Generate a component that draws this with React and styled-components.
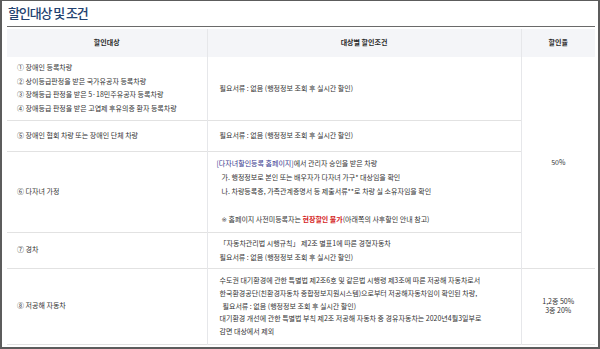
import React from 'react'
import styled, { createGlobalStyle } from 'styled-components'

const GlobalStyle = createGlobalStyle`
  html, body {
    margin: 0;
    padding: 0;
    background: #fff;
  }
  body {
    font-family: "Noto Sans CJK KR", "Noto Sans", sans-serif;
    color: #333;
  }
`

const Frame = styled.div`
  width: 600px;
  height: 349px;
  box-sizing: border-box;
  border: 2px solid #5c5c5c;
  border-top-width: 1px;
  padding: 2px 3px 0 5px;
  overflow: hidden;
`

const Title = styled.h2`
  margin: 0 0 2px;
  padding: 0 0 0 1px;
  height: 23px;
  border-bottom: 1px solid #6a6a6a;
  font-size: 13px;
  font-weight: 500;
  line-height: 20px;
  letter-spacing: -1.1px;
  color: #234270;
`

const Table = styled.table`
  width: 588px;
  border-collapse: collapse;
  table-layout: fixed;
  font-size: 7px;
  line-height: 13.5px;
  color: #333;
`

const HeadCell = styled.th`
  height: 28px;
  padding: 0;
  background: #f4f5f8;
  font-weight: 700;
  color: #2a2a2a;
  text-align: center;
  border-left: 1px solid #e6e7ea;
  &:first-child {
    border-left: none;
  }
`

const Row = styled.tr`
  height: ${p => p.$h}px;
  border-bottom: 1px solid #e2e2e2;
`

const Cell = styled.td`
  padding: 2px ${p => (p.$center ? 0 : 10)}px 2px ${p => (p.$center ? 0 : p.$pl || 10)}px;
  vertical-align: middle;
  text-align: ${p => (p.$center ? 'center' : 'left')};
  line-height: ${p => p.$lh || 13.5}px;
  border-left: 1px solid #e6e7ea;
  &:first-child {
    border-left: none;
  }
`

const Line = styled.div`
  padding-left: ${p => p.$indent || 0}px;
  white-space: nowrap;
  min-height: ${p => p.$lh || 13.5}px;
`

const LinkText = styled.span`
  color: #35358c;
`

const Warn = styled.strong`
  color: #d42323;
  font-weight: 700;
`

const Mark = styled.span`
  font-family: "DejaVu Sans", sans-serif;
  font-size: 6.5px;
  color: #444;
`

const Rate = styled.div`
  line-height: 9px;
`

const noDocs = '필요서류 : 없음 (행정정보 조회 후 실시간 할인)'

export default function App() {
  return (
    <>
      <GlobalStyle />
      <Frame>
        <Title>할인대상 및 조건</Title>
        <Table>
          <colgroup>
            <col style={{ width: 200 }} />
            <col style={{ width: 314 }} />
            <col style={{ width: 74 }} />
          </colgroup>
          <thead>
            <tr>
              <HeadCell>할인대상</HeadCell>
              <HeadCell>대상별 할인조건</HeadCell>
              <HeadCell>할인율</HeadCell>
            </tr>
          </thead>
          <tbody>
            <Row $h={63}>
              <Cell>
                <Line>① 장애인 등록차량</Line>
                <Line>② 상이등급판정을 받은 국가유공자 등록차량</Line>
                <Line>③ 장해등급 판정을 받은 5·18민주유공자 등록차량</Line>
                <Line>④ 장애등급 판정을 받은 고엽제 후유의증 환자 등록차량</Line>
              </Cell>
              <Cell $pl={12}>{noDocs}</Cell>
              <Cell $center rowSpan={4}>50%</Cell>
            </Row>
            <Row $h={31}>
              <Cell>⑤ 장애인 협회 차량 또는 장애인 단체 차량</Cell>
              <Cell $pl={12}>{noDocs}</Cell>
            </Row>
            <Row $h={81}>
              <Cell>⑥ 다자녀 가정</Cell>
              <Cell $pl={9} $lh={14}>
                <Line $lh={14}>
                  <LinkText>[다자녀할인등록 홈페이지]</LinkText>에서 관리자 승인을 받은 차량
                </Line>
                <Line $lh={14} $indent={5}>가. 행정정보로 본인 또는 배우자가 다자녀 가구* 대상임을 확인</Line>
                <Line $lh={14} $indent={5}>나. 차량등록증, 가족관계증명서 등 제출서류**로 차량 실 소유자임을 확인</Line>
                <Line $lh={14}>&nbsp;</Line>
                <Line $lh={14} $indent={5}>
                  <Mark>※</Mark> 홈페이지 사전미등록자는 <Warn>현장할인 불가</Warn>(아래쪽의 사후할인 안내 참고)
                </Line>
              </Cell>
            </Row>
            <Row $h={36}>
              <Cell>⑦ 경차</Cell>
              <Cell $pl={12} $lh={14}>
                <Line $lh={14}>「자동차관리법 시행규칙」 제2조 별표1에 따른 경형자동차</Line>
                <Line $lh={14}>{noDocs}</Line>
              </Cell>
            </Row>
            <Row $h={76}>
              <Cell>⑧ 저공해 자동차</Cell>
              <Cell $pl={12} $lh={12.8}>
                <Line $lh={12.8}>수도권 대기환경에 관한 특별법 제2조6호 및 같은법 시행령 제3조에 따른 저공해 자동차로서</Line>
                <Line $lh={12.8}>한국환경공단(친환경자동차 종합정보지원시스템)으로부터 저공해자동차임이 확인된 차량,</Line>
                <Line $lh={12.8} $indent={3}>{noDocs}</Line>
                <Line $lh={12.8}>대기환경 개선에 관한 특별법 부칙 제2조 저공해 자동차 중 경유자동차는 2020년4월3일부로</Line>
                <Line $lh={12.8}>감면 대상에서 제외</Line>
              </Cell>
              <Cell $center>
                <Rate>1,2종 50%</Rate>
                <Rate>3종 20%</Rate>
              </Cell>
            </Row>
          </tbody>
        </Table>
      </Frame>
    </>
  )
}
